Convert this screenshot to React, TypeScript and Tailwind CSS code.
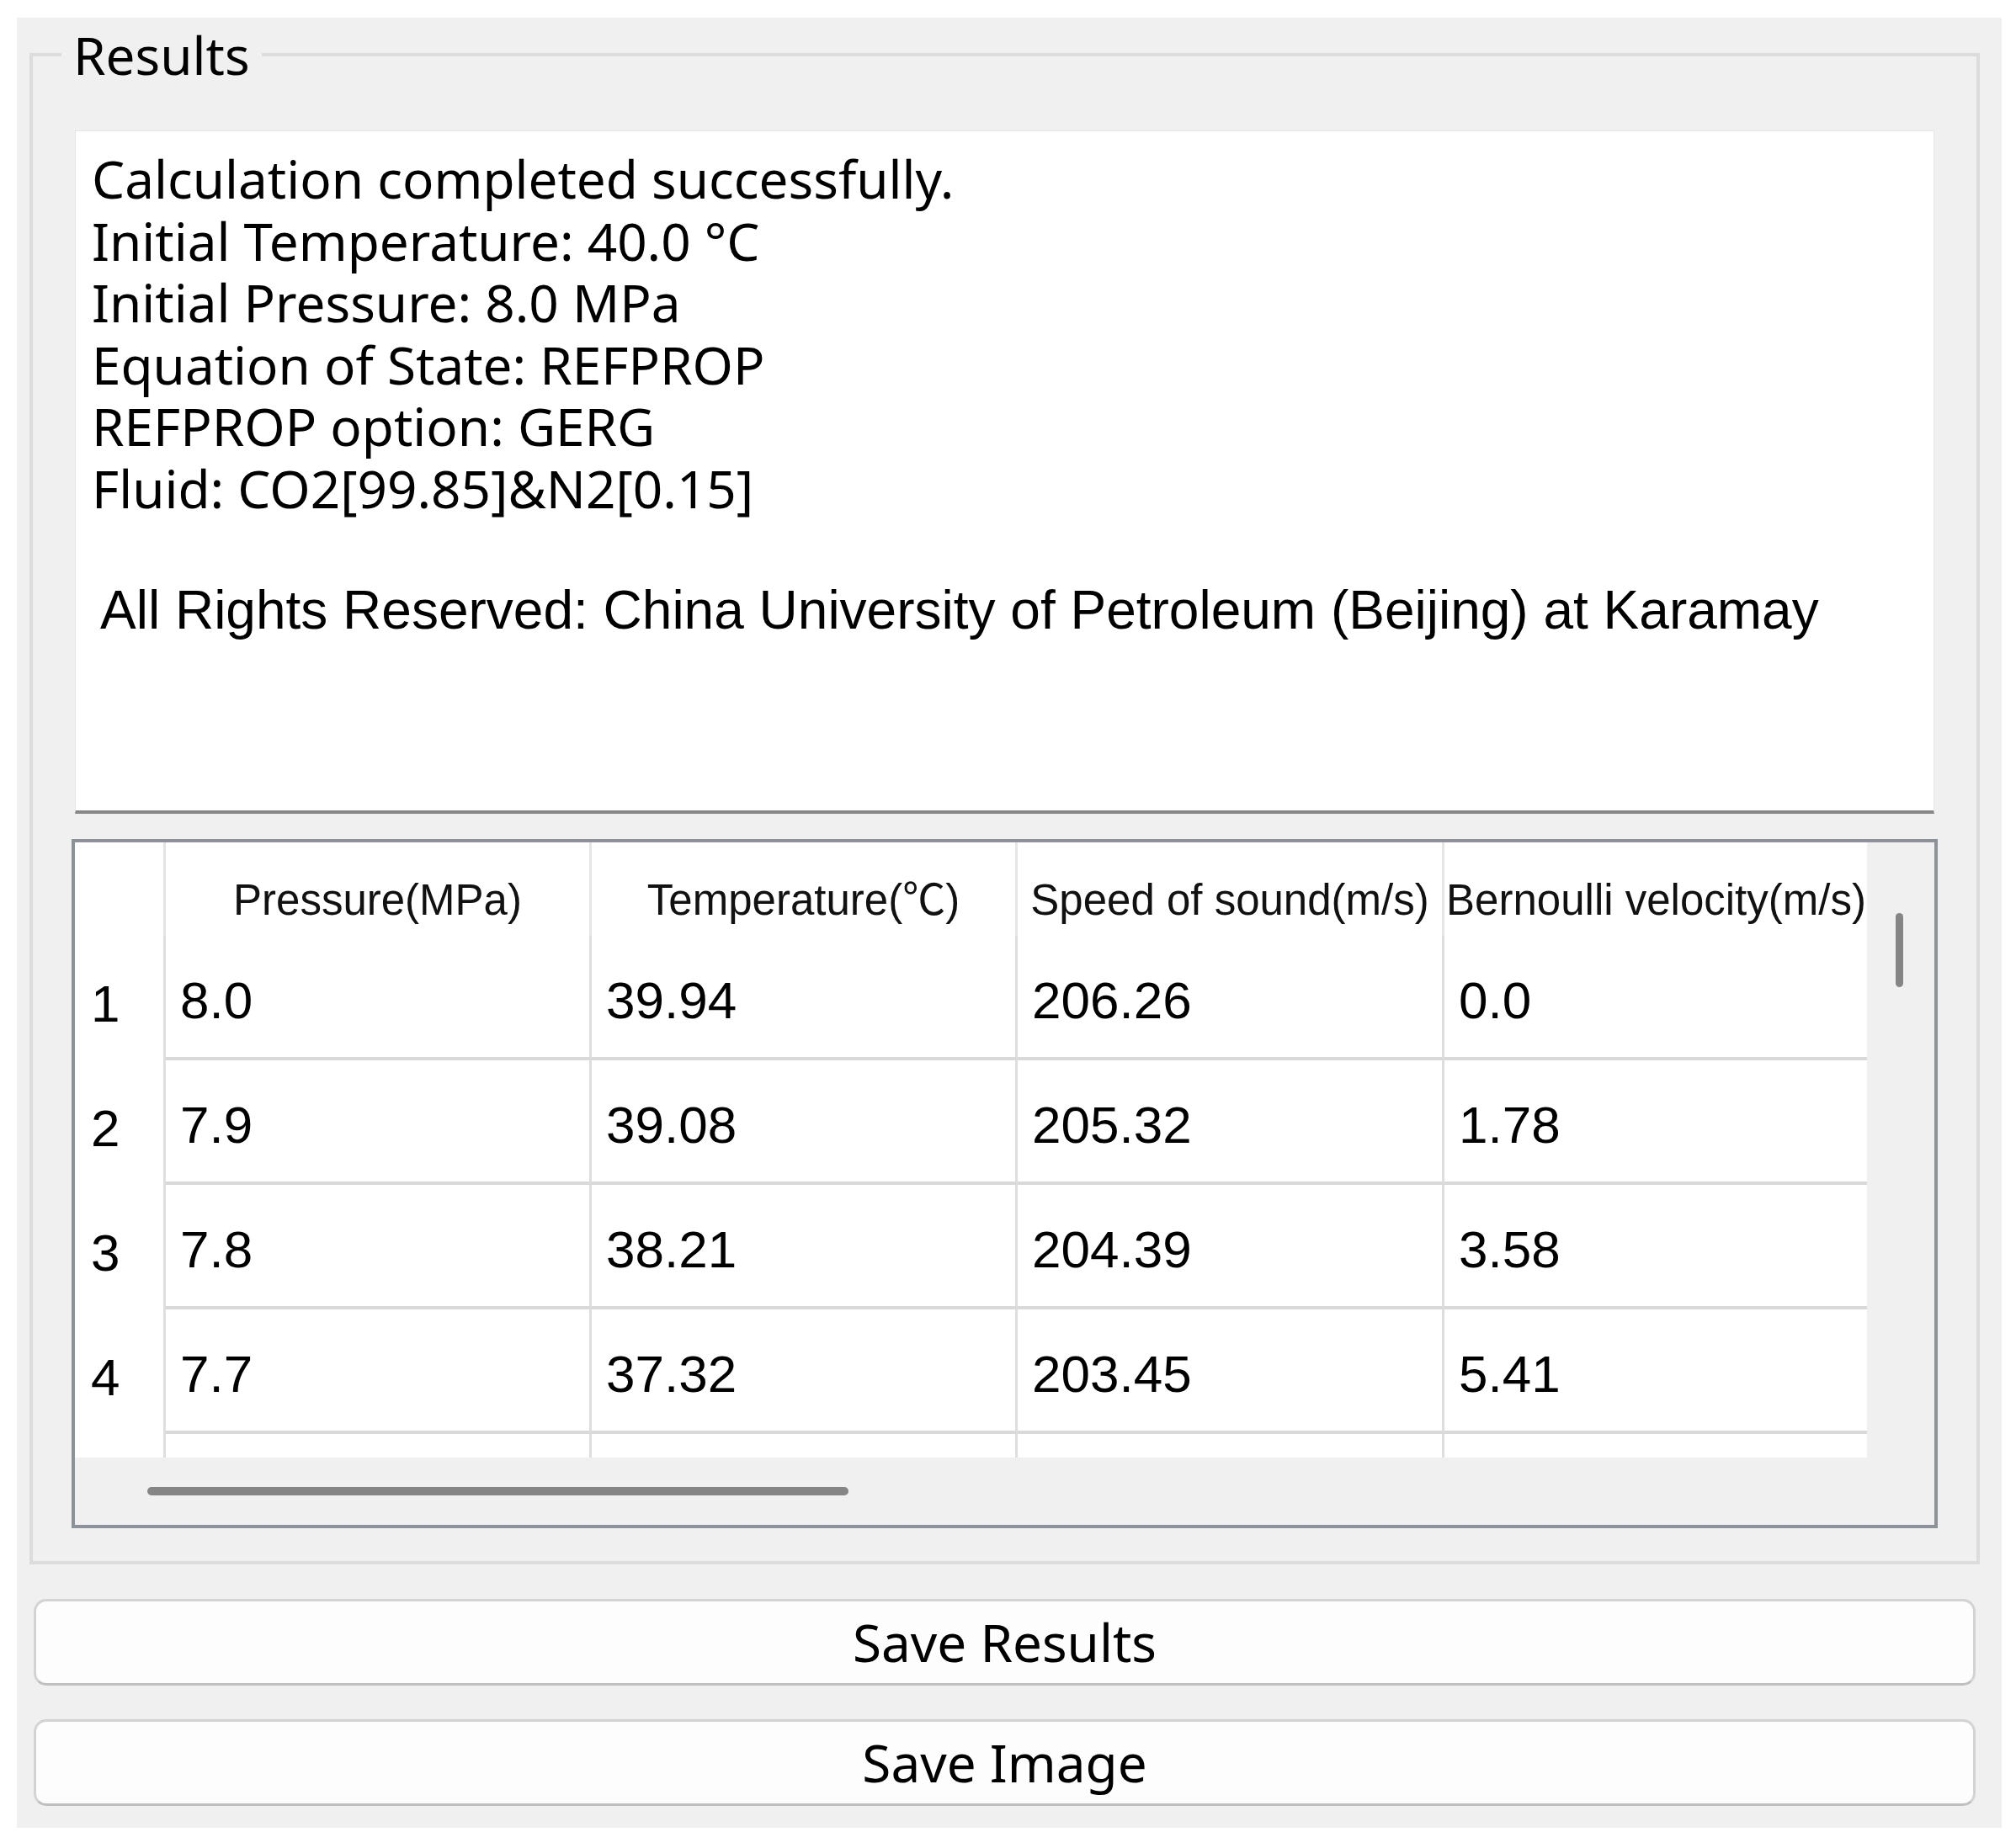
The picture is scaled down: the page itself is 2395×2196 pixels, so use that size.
const uiFont = { fontFamily: '"Noto Sans", "Open Sans", sans-serif' };

const summary = [
  "Calculation completed successfully.",
  "Initial Temperature: 40.0 °C",
  "Initial Pressure: 8.0 MPa",
  "Equation of State: REFPROP",
  "REFPROP option: GERG",
  "Fluid: CO2[99.85]&N2[0.15]",
];

const headers = [
  "Pressure(MPa)",
  "Temperature(℃)",
  "Speed of sound(m/s)",
  "Bernoulli velocity(m/s)",
];

// width of each data column incl. its right divider
const colWidths = ["w-[506px]", "w-[506px]", "w-[507px]", "w-[506px]"];

const rows = [
  ["1", "8.0", "39.94", "206.26", "0.0"],
  ["2", "7.9", "39.08", "205.32", "1.78"],
  ["3", "7.8", "38.21", "204.39", "3.58"],
  ["4", "7.7", "37.32", "203.45", "5.41"],
];

function HeaderRow() {
  return (
    <div className="flex h-[111px] shrink-0">
      <div className="w-[108px] shrink-0 border-r-[3px] border-[#e3e3e3] bg-white" />
      {headers.map((h, i) => (
        <div
          key={h}
          className={`${colWidths[i]} shrink-0 flex items-center justify-center pt-[28px] border-r-[3px] border-[#e6e6e6] text-[51px] text-[#111] whitespace-nowrap`}
        >
          {h}
        </div>
      ))}
    </div>
  );
}

function DataRow({ cells }: { cells: string[] }) {
  const [num, ...vals] = cells;
  return (
    <div className="flex h-[148px] shrink-0">
      <div className="w-[108px] shrink-0 flex items-center pt-[12px] pl-[19px] border-r-[3px] border-[#dedede] text-[62px]">
        {num}
      </div>
      {vals.map((v, i) => (
        <div
          key={i}
          className={`${colWidths[i]} shrink-0 flex items-center pt-[8px] pl-[17px] border-r-[3px] border-b-4 border-r-[#dedede] border-b-[#d9d9d9] text-[62px]`}
        >
          {v}
        </div>
      ))}
    </div>
  );
}

function ResultsTable() {
  return (
    <div
      className="mt-[30px] h-[819px] border-4 border-[#8d929a] grid grid-cols-[2129px_79px] grid-rows-[731px_80px] bg-[#f0f0f0]"
      style={{ fontFamily: '"Liberation Sans", Arial, "Noto Sans CJK SC", sans-serif' }}
    >
      <div className="bg-white overflow-hidden flex flex-col text-black">
        <HeaderRow />
        {rows.map((r) => (
          <DataRow key={r[0]} cells={r} />
        ))}
        <DataRow cells={["", "", "", "", ""]} />
      </div>
      <div className="pl-[34px] pt-[84px]">
        <div className="w-[9px] h-[88px] rounded-full bg-[#858585]" />
      </div>
      <div className="pl-[86px] pt-[35px]">
        <div className="w-[833px] h-[10px] rounded-full bg-[#858585]" />
      </div>
      <div />
    </div>
  );
}

function WinButton({ label }: { label: string }) {
  return (
    <button
      className="mx-[5px] h-[103px] rounded-[15px] border-[3px] border-[#d3d3d3] border-b-[#bfbfbf] bg-[#fdfdfd] text-[62px] text-black flex items-center justify-center"
      style={uiFont}
    >
      {label}
    </button>
  );
}

export default function App() {
  return (
    <div className="w-[2395px] h-[2196px] bg-white pt-[21px] pl-[20px]">
      <div className="w-[2358px] h-[2151px] bg-[#f0f0f0] pt-[19px] pl-[15px] pr-[26px] flex flex-col">
        <fieldset className="border-4 border-[#dcdcdc] px-[46px] pt-[65px] pb-[39px]">
          <legend
            className="-ml-[12px] px-[14px] text-[62px] leading-[50px] text-black"
            style={uiFont}
          >
            Results
          </legend>

          {/* summary text box */}
          <div className="mx-[4px] h-[812px] bg-white border border-[#e6e6e6] border-b-4 border-b-[#878787] pt-[20px] pl-[19px] text-black">
            <div className="text-[62px] leading-[73.6px]" style={uiFont}>
              {summary.map((line) => (
                <div key={line} className="whitespace-nowrap">
                  {line}
                </div>
              ))}
            </div>
            <div
              className="mt-[70px] ml-[10px] text-[64px] leading-[75px] whitespace-nowrap"
              style={{ fontFamily: '"Liberation Sans", Arial, sans-serif' }}
            >
              All Rights Reserved: China University of Petroleum (Beijing) at Karamay
            </div>
          </div>

          <ResultsTable />
        </fieldset>

        <div className="mt-[41px] flex flex-col gap-[40px]">
          <WinButton label="Save Results" />
          <WinButton label="Save Image" />
        </div>
      </div>
    </div>
  );
}
